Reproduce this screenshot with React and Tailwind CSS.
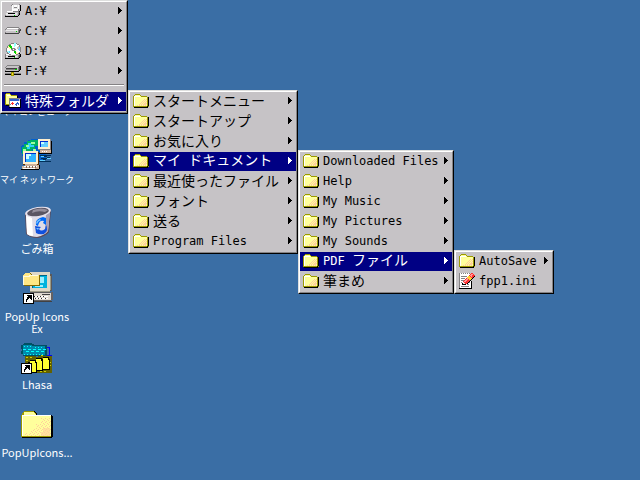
const COLORS = {
  o: '#9c9a00',
  k: '#000000',
  w: '#ffffff',
  y: '#ffff9c',
  p: '#ffcf9c',
  g: '#848284',
  l: '#c6c3c6',
  e: '#e7e7e7',
  d: '#424142',
  n: '#00cf00',
  c: '#63cfff',
  b: '#3161ce',
  r: '#ff3031',
  m: '#ff9a9c',
  a: '#9cffff',
  t: '#ffcf31',
};

const FOLDER = [
  '..ooooo.........',
  '.oyyyyyo........',
  'owwwwwwyoooooo..',
  'owyyyyyyyyyyyyok',
  'owyyyyyyyyyyyyok',
  'owyyyyyyyyypypok',
  'owyyyyyyyypypyok',
  'owyyyyyyypypypok',
  'owyyyyyypypypyok',
  'owyyyyypypypppok',
  'owyyyypypypppyok',
  'owyypypypypypyok',
  'ooooooooooooooko',
  '.kkkkkkkkkkkkkk.',
];

const SPECIAL = [
  '.oooo...........',
  'oyyyyo..........',
  'oywwwyoooooo....',
  'oyyyyyyyyyyyk...',
  'oyyyyyyyyyyyk...',
  'oyyygggggggggggg',
  'oyyygbbbbbbbbblk',
  'oyyygbbbbbbbbblk',
  'oyyygwwwwwwwwwwk',
  'oyyygwwrwwwwbwwk',
  'oyyygwrrrwwbbbwk',
  'ooooggwrwwbbwbwk',
  '.kkkgwwwwwwbwwwk',
  '....gwwwwwwwwwwk',
  '....kkkkkkkkkkkk',
];

const FLOPPY = [
  '.......gllllllg.',
  '......gwewwwewlk',
  '......lwewwwewlk',
  '......lwegggewlk',
  '......lweeeeewlk',
  '......lwwwwwwglk',
  '..lllllwwwwwwglk',
  '.lwwwwwwggggggk.',
  'lllllllllllllgd.',
  'leekkkkkkkeelgk.',
  'leeeeeeeeeeelgk.',
  'gllllllllnlllk..',
  'kkkkkkkkkkkkk...',
];

const DISK = [
  '..gggggggggggg..',
  '.gwwwwwwwwwwwlg.',
  'gllllllllllllggd',
  'leeeeeeeeeeeegdd',
  'lllllllllllnlgd.',
  'gllllllllllllgd.',
  'dddddddddddddd..',
];

const CD = [
  '......gggaag....',
  '....ggwwwaawgg..',
  '...gnnwwwaawwwg.',
  '..gynnnwwawwwlg.',
  '..gyynnwwwwwllcg',
  '.gwwyyngggewllcg',
  '.gwwwwggwggwwccg',
  '.gwwwwegggewwwcg',
  '.gaacwwwwnnwwwwg',
  '..gacwwwwnnywwg.',
  '..ggwwwwwwnyygk.',
  'gwwwggwwwwwgglgk',
  'gllllllggglllgdk',
  'geekkkkkkkeelgdk',
  'gllllllllnlllgk.',
  'kkkkkkkkkkkkkk..',
];

const NETDRIVE = [
  '..ggggggggggggg.',
  '.glllllllllllldk',
  'gllllllllllllgdk',
  'ldddddddddddlgdk',
  'lgggggggggnnlgdk',
  'gllllllllllllgk.',
  'kkkkkkkkkkkkkk..',
  '......ooo.......',
  'ggggggotoggggggg',
  'kkkkkkotokkkkkkk',
  '......ooo.......',
];

const INI = [
  'gwgwgwgwgwg.rr..',
  'gwwwwwwwwwwrmmr.',
  'gwwwwwwwwwrmmrrr',
  'gwggggggwttrmrrk',
  'gwwwwwwwttttrrk.',
  'gwggggwrmttttk..',
  'gwwwwwrmmrttk...',
  'gwgggrmmrrrk....',
  'gwwwrmmrrrkwk...',
  'gwgeerrrrkgwk...',
  'gwwkeerrkwwwk...',
  'gwwkkkkwggwwk...',
  'gwwwwwwwwwwwk...',
  'gwggggggggwwk...',
  'gwwwwwwwwwwwk...',
  'kkkkkkkkkkkkk...',
];

function Pixels({ rows }) {
  return (
    <svg
      width="16"
      height={rows.length}
      viewBox={`0 0 16 ${rows.length}`}
      shapeRendering="crispEdges"
      className="shrink-0"
      aria-hidden="true"
    >
      {rows.flatMap((row, y) =>
        [...row].map((ch, x) =>
          COLORS[ch] ? <rect key={`${x}-${y}`} x={x} y={y} width="1" height="1" fill={COLORS[ch]} /> : null
        )
      )}
    </svg>
  );
}

function Canvas({ children, smooth }) {
  return (
    <svg
      width="32"
      height="32"
      viewBox="0 0 32 32"
      shapeRendering={smooth ? 'auto' : 'crispEdges'}
      className="shrink-0 overflow-visible"
      aria-hidden="true"
    >
      {children}
    </svg>
  );
}

function Shortcut() {
  return (
    <g>
      <path d="M0 21h11v11H0z" fill="#000" />
      <path d="M1 22h9v9H1z" fill="#fff" />
      <path d="M4 23h5v5H8v-1H7v-1H6v1H5v1H4v2H3v-3h1v-2h1v-1H4z" fill="#000" />
    </g>
  );
}

function ComputerIcon() {
  return (
    <Canvas>
      <path d="M6 2h21v18H6z" fill="#c6c3c6" />
      <path d="M9 5h15v12H9z" fill="#31cfff" />
      <path d="M2 23h28v7H2z" fill="#c6c3c6" />
    </Canvas>
  );
}

function NetworkIcon() {
  return (
    <Canvas>
      <path d="M7 2h3V1h9v1h3v2h2v3h1v14h-2v2H8v-1H5v-2H3v-2H1v-3H0v-7h1V7h2V4h4z" fill="#0061ce" />
      <path d="M9 2h8v1h3v3h-3v2h-3v3h-3v2H8v3H5v3H3v-3H1V9h2V6h3V3h3z" fill="#00b263" />
      <path d="M5 7h3v2H5zM10 4h4v2h-4zM2 11h3v3H2zM12 11h3v3h-3z" fill="#9cff9c" />
      <path d="M7 5h3v2h3v2H9v2H6V9h2V7H7z" fill="#31cfff" />
      {/* far machine */}
      <path d="M17 1h13v2h1v9H17z" fill="#848284" />
      <path d="M17 1h12v10H17z" fill="#ffefce" />
      <path d="M19 3h8v6h-8z" fill="#0030ce" />
      <path d="M20 4h7v5h-7z" fill="#63cfff" />
      <path d="M20 4h3v2h-3z" fill="#ceffff" />
      <path d="M19 12h12v3H19z" fill="#ceb29c" />
      <path d="M18 15h13v1H18zM30 3h1v13h-1z" fill="#000" />
      <path d="M21 13h1v1h-1zM23 13h1v1h-1zM25 13h1v1h-1z" fill="#fff" />
      {/* cable */}
      <path d="M19 17h11v1H19zM20 20h7v1h-7zM18 23h12v1H18zM23 18h3v1h-3zM26 19h3v1h-3zM22 21h3v1h-3z" fill="#00305a" />
      <path d="M20 18h3v1h-3zM26 20h4v1h-4zM19 22h5v1h-5z" fill="#63cfff" />
      {/* near machine */}
      <path d="M2 14h16v13H2z" fill="#633000" />
      <path d="M2 13h15v13H2z" fill="#ffefce" />
      <path d="M4 15h11v9H4z" fill="#0030ce" />
      <path d="M5 16h10v8H5z" fill="#31b2ff" />
      <path d="M5 16h5v2H8v3H5z" fill="#ceffff" />
      <path d="M4 26h12v1h3v4H1v-3h3z" fill="#ceb29c" />
      <path d="M3 28h13v1H3zM2 30h12v1H2z" fill="#fff" />
      <path d="M5 28h1v2H5zM8 28h1v2H8zM11 28h1v2h-1zM14 28h1v2h-1z" fill="#846552" />
      <path d="M0 31h18v1H0zM18 27h1v4h-1z" fill="#000" />
    </Canvas>
  );
}

function RecycleIcon() {
  return (
    <Canvas smooth>
      <path d="M4 7L5 28Q9 32 17 32Q25 30 28 26L30 4Z" fill="#5a4a5a" />
      <path d="M5 8L6 28Q10 31 16 31Q24 29 27 25L29 5Z" fill="#dedbe7" />
      <path d="M5 9L6 28Q8 30 12 30L11 12Z" fill="#fff" />
      <path d="M25 9L29 6L27 25L24 28Z" fill="#a59eb5" />
      <ellipse cx="17" cy="6" rx="13" ry="5" transform="rotate(-9 17 6)" fill="#e7e3ef" />
      <ellipse cx="17" cy="6" rx="11" ry="4" transform="rotate(-9 17 6)" fill="#5a5563" />
      <path d="M12 4Q20 1 27 4L24 6Q17 4 11 7Z" fill="#948e9c" />
      {/* recycling arrows */}
      <path d="M15 19Q14 14 19 12L22 11L25 12V19L22 17L23 15Q18 14 17 20Z" fill="#0069f7" />
      <path d="M14 20L20 21L18 23Q20 26 24 23L25 19Q28 24 23 28Q18 29 15 27Z" fill="#1051de" />
      <path d="M15 17Q16 14 19 13L20 14Q17 15 16 18ZM15 22H18L17 24Z" fill="#73c3ff" />
    </Canvas>
  );
}

function PopUpIcon() {
  return (
    <Canvas>
      <g transform="translate(2 -2)">
        <path d="M7 0h20v2h2v17h-2v2H7z" fill="#5a595a" />
        <path d="M7 0h20v19H7z" fill="#ded7c6" />
        <path d="M9 3h15v13H9z" fill="#006384" />
        <path d="M10 4h14v12H10z" fill="#00b2de" />
        <path d="M17 5h4v6h-4zM12 13h8v2h-8z" fill="#9cefff" />
        <path d="M7 19h20v1H7zM27 4h1v14h-1z" fill="#9c9a84" />
        <path d="M5 21h23v-1h2v8h-2v2H7v-1H5z" fill="#636163" />
        <path d="M6 21h22v7H6z" fill="#ded7ce" />
        <path d="M10 24h15v1H10zM10 26h15v1H10z" fill="#fff" />
        <path d="M11 24h1v1h-1zM14 24h1v1h-1zM17 24h1v1h-1zM20 24h1v1h-1zM12 26h1v1h-1zM15 26h1v1h-1zM18 26h1v1h-1zM22 26h1v1h-1z" fill="#313031" />
        <path d="M19 22h8v1h-8zM8 29h21v1H8z" fill="#424142" />
        <path d="M1 3h1V1h6v1h1v1h8v11H1z" fill="#846900" />
        <path d="M0 3h1V2h1V1h5v1h1v1h8v10H0z" fill="#ffe784" />
        <path d="M0 4h6V3h9v1H7v1H1v8H0z" fill="#fffbde" />
        <Shortcut />
      </g>
    </Canvas>
  );
}

function LhasaIcon() {
  return (
    <Canvas>
      <path d="M0 3h2V2h1V1h8v1h2v1h13v11H2v-2H0V9h1V7H0z" fill="#005163" />
      <path d="M2 3h9v1h13v9H2z" fill="#008aad" />
      <path d="M3 4h1v1H3zM6 4h1v1H6zM9 4h1v1H9zM2 7h3v1H2zM7 7h3v1H7zM12 7h3v1h-3zM17 7h3v1h-3zM22 7h3v1h-3zM5 9h3v1H5zM10 9h3v1h-3zM15 9h3v1h-3zM20 9h3v1h-3zM3 12h1v1H3zM6 12h1v1H6zM9 12h1v1H9zM12 12h1v1h-1zM15 12h1v1h-1zM18 12h1v1h-1zM21 12h1v1h-1zM14 5h1v1h-1zM17 5h1v1h-1zM20 5h1v1h-1z" fill="#00ffff" />
      <path d="M26 5h3v8h2v1h-1v1h-1v1h-1v-1h-1v-1h-1v-1h2V6h-2z" fill="#0000ff" />
      <path d="M4 14h11v1h2v-1h14v17H4z" fill="#636100" />
      <path d="M5 15h2v1H5zM9 15h2v1H9zM5 18h2v1H5zM9 18h2v1H9zM20 13h2v1h-2zM26 17h2v1h-2zM28 20h2v1h-2zM28 23h2v1h-2zM27 26h2v1h-2zM19 29h2v1h-2zM23 29h2v1h-2z" fill="#cece00" />
      <path d="M22 15h6v2h1v11h-9V17h2z" fill="#000" />
      <path d="M22 16h5v2h1v9h-7v-9h1z" fill="#ffff31" />
      <path d="M15 16h6v2h1v11h-9V18h2z" fill="#000" />
      <path d="M15 17h5v2h1v9h-7v-9h1z" fill="#ffff31" />
      <path d="M9 18h6v2h1v11H7V20h2z" fill="#000" />
      <path d="M9 19h5v2h1v9H8v-9h1z" fill="#ffff31" />
      <Shortcut />
    </Canvas>
  );
}

function BigFolderIcon() {
  return (
    <Canvas>
      <defs>
        <pattern id="dither" width="4" height="4" patternUnits="userSpaceOnUse">
          <path d="M0 0h1v1H0zM2 1h1v1H2zM1 3h1v1H1zM3 2h1v1H3z" fill="#ffcf9c" />
        </pattern>
      </defs>
      <path d="M3 1h11v1h1v1h1v2h15v1h1v21h-1v1H1v-1h29V6H15V4h-1V2H3z" fill="#000" />
      <path d="M0 5h1V3h1V2h1V1h10v1h1v1h1v2h15v22H0z" fill="#9c9a00" />
      <path d="M3 2h10v1h1v1h1v2h15v20H1V5h2z" fill="#ffff9c" />
      <path d="M20 8h10v18H4v-3h6v-4h5v-5h5z" fill="url(#dither)" />
      <path d="M22 18h7v8h-9v-4h2z" fill="#ffcf9c" fillOpacity="0.6" />
      <path d="M1 5h29v1H2v20H1z" fill="#fff" />
    </Canvas>
  );
}

const DESKTOP = [
  { name: 'マイコンピュータ', Icon: ComputerIcon, narrow: true },
  { name: 'マイ ネットワーク', Icon: NetworkIcon, narrow: true },
  { name: 'ごみ箱', Icon: RecycleIcon },
  { name: 'PopUp Icons Ex', Icon: PopUpIcon },
  { name: 'Lhasa', Icon: LhasaIcon },
  { name: 'PopUpIcons...', Icon: BigFolderIcon },
];

const folder = (label, active = false) => ({ label, active, icon: FOLDER, sub: true });

const MENUS = [
  {
    id: 'drives',
    box: 'w-32',
    items: [
      { label: 'A:¥', icon: FLOPPY, sub: true },
      { label: 'C:¥', icon: DISK, sub: true },
      { label: 'D:¥', icon: CD, sub: true },
      { label: 'F:¥', icon: NETDRIVE, sub: true },
      { separator: true },
      { label: '特殊フォルダ', icon: SPECIAL, sub: true, active: true },
    ],
  },
  {
    id: 'special',
    box: 'mt-[90px] w-[170px]',
    items: [
      folder('スタートメニュー'),
      folder('スタートアップ'),
      folder('お気に入り'),
      folder('マイ ドキュメント', true),
      folder('最近使ったファイル'),
      folder('フォント'),
      folder('送る'),
      folder('Program Files'),
    ],
  },
  {
    id: 'documents',
    box: 'mt-[150px] w-[156px]',
    items: [
      folder('Downloaded Files'),
      folder('Help'),
      folder('My Music'),
      folder('My Pictures'),
      folder('My Sounds'),
      folder('PDF ファイル', true),
      folder('筆まめ'),
    ],
  },
  {
    id: 'pdf',
    box: 'mt-[250px] w-[100px]',
    items: [folder('AutoSave'), { label: 'fpp1.ini', icon: INI }],
  },
];

// Latin runs are set in the monospaced face, everything else in the CJK one
function Label({ text }) {
  return (
    <span className='grow whitespace-pre text-left font-["Noto_Sans_CJK_JP",sans-serif] text-[14px] leading-[17px]'>
      {text.split(/([ -~¥]+)/).map((run, i) =>
        i % 2 ? (
          <span key={i} className='font-["DejaVu_Sans_Mono",monospace] text-[12px]'>
            {run}
          </span>
        ) : (
          run
        )
      )}
    </span>
  );
}

function MenuItem({ item }) {
  if (item.separator) {
    return <li role="separator" className="mx-0.5 mt-0.5 mb-[5px] h-0.5 border-t border-b border-t-[#848284] border-b-white" />;
  }
  return (
    <li>
      <button
        type="button"
        className={`flex h-[19px] w-full items-center gap-1 pr-1 pb-0.5 pl-[3px] ${
          item.active ? 'bg-[#000084] text-white' : 'text-black'
        }`}
      >
        <Pixels rows={item.icon} />
        <Label text={item.label} />
        {item.sub && (
          <svg width="4" height="7" viewBox="0 0 4 7" shapeRendering="crispEdges" className="shrink-0" aria-hidden="true">
            <path d="M0 0h1v1h1v1h1v1h1v1H3v1H2v1H1v1H0z" fill="currentColor" />
          </svg>
        )}
      </button>
    </li>
  );
}

function Menu({ menu }) {
  return (
    <div className={`shrink-0 border border-t-[#dedfde] border-r-black border-b-black border-l-[#dedfde] ${menu.box}`}>
      <ul className="flex flex-col gap-px border border-t-white border-r-[#848284] border-b-[#848284] border-l-white bg-[#c6c3c6] pb-px">
        {menu.items.map((item, i) => (
          <MenuItem key={item.label ?? i} item={item} />
        ))}
      </ul>
    </div>
  );
}

function DesktopIcon({ name, Icon, narrow }) {
  return (
    <button type="button" className="flex h-[68px] w-full flex-col items-center gap-1 text-white">
      <Icon />
      <span
        className={`text-center font-["Noto_Sans_CJK_JP",sans-serif] leading-3 ${
          narrow ? 'whitespace-nowrap text-[9px]' : 'text-[11px]'
        }`}
      >
        {name}
      </span>
    </button>
  );
}

export default function App() {
  return (
    <main className="relative min-h-screen overflow-hidden bg-[#3a6ea5]">
      <div className="flex w-[74px] flex-col pt-[70px]">
        {DESKTOP.map((item) => (
          <DesktopIcon key={item.name} {...item} />
        ))}
      </div>

      {/* Cascading menus, open over the desktop */}
      <nav className="absolute top-0 left-0 flex items-start">
        {MENUS.map((menu) => (
          <Menu key={menu.id} menu={menu} />
        ))}
      </nav>
    </main>
  );
}
